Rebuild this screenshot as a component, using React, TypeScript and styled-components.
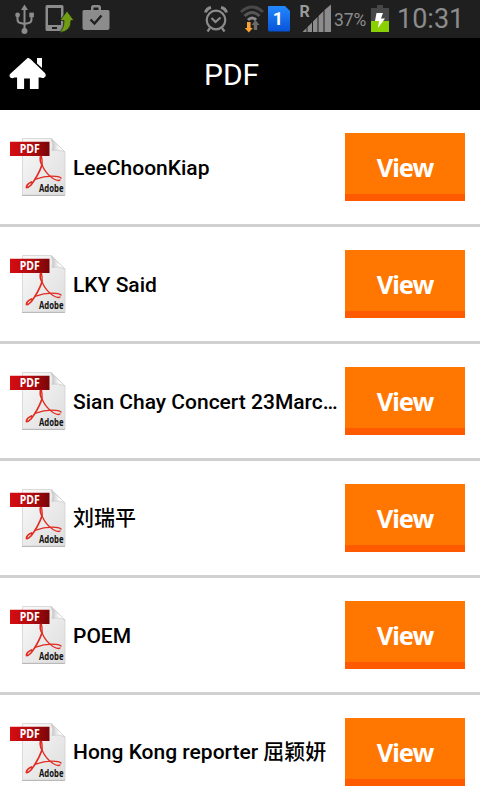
import React from 'react';
import styled, { createGlobalStyle } from 'styled-components';

const files = [
  { name: 'LeeChoonKiap' },
  { name: 'LKY Said' },
  { name: 'Sian Chay Concert 23Marc…' },
  { name: '刘瑞平', cjk: true },
  { name: 'POEM' },
  { name: 'Hong Kong reporter 屈颖妍', cjk: true },
];

const App = () => {
  return (
    <Screen>
      <GlobalStyle />
      <StatusBar>
        <StatusIcons />
        <Percent>37%</Percent>
        <Battery />
        <Clock>10:31</Clock>
      </StatusBar>
      <Header>
        <HomeButton>
          <HomeIcon />
        </HomeButton>
        <Title>PDF</Title>
        <div className="blank" />
      </Header>
      <List>
        {files.map(({ name, cjk }) => (
          <Row key={name}>
            <PdfIcon />
            <Name $cjk={cjk}>{name}</Name>
            <ViewButton>View</ViewButton>
          </Row>
        ))}
      </List>
    </Screen>
  );
};

const StatusIcons = () => (
  <svg width="334" height="38" viewBox="0 0 334 38">
    {/* usb */}
    <g stroke="#8c8c8c" fill="none" strokeWidth="2">
      <path d="M24.5 9v22M17.5 16v3.5q0 3 3 3.6l4 .9M31.5 16v3.5q0 3-3 3.6l-4 .9" />
    </g>
    <g fill="#8c8c8c">
      <path d="M24.5 4.5l3.5 5.5h-7z" />
      <circle cx="17.6" cy="15" r="2.4" />
      <rect x="29.3" y="12.6" width="4.6" height="4.6" />
      <circle cx="24.5" cy="31" r="3" />
    </g>
    {/* phone with arrow */}
    <path fill="#8c8c8c" fillRule="evenodd" d="M47 5h15q1.5 0 1.5 1.5V29.5q0 1.5-1.5 1.5H47q-1.5 0-1.5-1.5V6.5Q45.5 5 47 5zM48 8v17h13V8zM52 27v2h5v-2z" />
    <path fill="#6f9c12" stroke="#1f1f1f" strokeWidth=".8" d="M67 11l7 9.5h-3q0 11.5-12 12q5-3.5 5-12h-4z" />
    {/* briefcase */}
    <path fill="#8c8c8c" fillRule="evenodd" d="M84 10h7V7.5Q91 5 93.5 5h5q2.5 0 2.5 2.5V10h7q1.5 0 1.5 1.5v16.5q0 2-2 2h-23q-2 0-2-2V11.5Q82.5 10 84 10zM93.5 10h5V7.5h-5z" />
    <path d="M90.5 19.5l4 4 7-8" fill="none" stroke="#1f1f1f" strokeWidth="2.4" />
    {/* alarm */}
    <g fill="none" stroke="#8c8c8c" strokeWidth="2.2">
      <circle cx="216" cy="20" r="9.3" />
      <path d="M211.5 18l4 4 5-4.5M210 28l-2.5 3.5M222 28l2.5 3.5" />
      <path d="M205.5 12.5q1-4 5.5-5M226.5 12.5q-1-4-5.5-5" strokeWidth="3" />
    </g>
    {/* wifi with traffic arrows */}
    <g fill="none" strokeWidth="3">
      <path d="M241 12q11-10 22 0" stroke="#484848" />
      <path d="M244.5 16q7.5-7 15 0" stroke="#585858" />
      <path d="M248 20q4-4 8 0" stroke="#8c8c8c" />
    </g>
    <path fill="#f9a132" d="M247 22h3.6v6h2.2l-4 4.5-4-4.5h2.2z" />
    <path fill="#6c6c6c" d="M255.5 20l4 5h-2.3v5h-3.4v-5h-2.3z" />
    {/* sim card */}
    <defs>
      <linearGradient id="sim" x2="0" y2="1">
        <stop stopColor="#2389ff" />
        <stop offset="1" stopColor="#0753d8" />
      </linearGradient>
    </defs>
    <path fill="url(#sim)" d="M269 6h16l5 5v19q0 1.5-1.5 1.5h-19q-1.5 0-1.5-1.5V7q0-1 1-1z" />
    <text x="272.8" y="25" fill="#fff" fontFamily="Roboto" fontWeight="700" fontSize="18">1</text>
    {/* signal */}
    <text x="299.5" y="17" fill="#9a9a9a" fontFamily="Roboto" fontWeight="700" fontSize="16">R</text>
    <path fill="#8c8c8c" d="M302.5 32l4-4v4zM307.5 27l4.5-4.5V32h-4.5zM313 21.5l4.5-4.5V32H313zM318.5 16l5-5V32h-5zM324.5 10l6.5-5.5V32h-6.5z" />
  </svg>
);

const Battery = () => (
  <svg width="18" height="38" viewBox="0 0 18 38">
    <path fill="#474747" d="M6 5h6v3h6v13H0V8h6z" />
    <path fill="#8bd000" d="M0 21h18v11H0z" />
    <path fill="#fff" d="M5.5 13h6.5l-2 5.5h4l-7 9.5 1-7H4z" />
  </svg>
);

const HomeIcon = () => (
  <svg width="38" height="36" viewBox="0 0 38 36">
    <path
      fill="#fff"
      stroke="#fff"
      strokeWidth="1.2"
      strokeLinejoin="round"
      d="M19 2.5L1.5 18.5Q.5 20 2 21.3Q3.5 22 5 21h3.7v11.5h5.8V22h7v10.5h7.5V21h3.2q1.8 1 3-.2Q37 19.5 35.5 17.5L24 6.5Q20.5 2.5 19 2.5z"
    />
    <path fill="#fff" d="M28 2h5v10l-5-4.5z" />
  </svg>
);

const PdfIcon = () => (
  <PdfSvg viewBox="0 0 56 60">
    <defs>
      <linearGradient id="page" x2="1" y2="1">
        <stop stopColor="#fafafa" />
        <stop offset="1" stopColor="#dcdcdc" />
      </linearGradient>
      <linearGradient id="banner" x2="1" y2="0">
        <stop stopColor="#d60c10" />
        <stop offset=".5" stopColor="#b50c10" />
        <stop offset="1" stopColor="#780508" />
      </linearGradient>
      <linearGradient id="fold" x2="1" y2="0">
        <stop stopColor="#bcbcbc" />
        <stop offset=".6" stopColor="#fff" />
      </linearGradient>
    </defs>
    <path fill="url(#page)" stroke="#d2d2d2" strokeWidth=".8" d="M12.5 1.5H41L55 15v43H12.5z" />
    <path stroke="#b9b9b9" d="M12 58.5h43" />
    <path fill="url(#fold)" stroke="#c8c8c8" strokeWidth=".7" d="M41 1.5q3 6 1 12 6-2 13 1.5z" />
    <path fill="url(#banner)" d="M0 4.7h39.5V19H0z" />
    <text x="9.8" y="15.8" textLength="20" lengthAdjust="spacingAndGlyphs" fill="#fff" fontFamily="Noto Sans" fontWeight="700" fontSize="11.5">PDF</text>
    <g fill="none" stroke="#e12b21" strokeWidth="1.3" strokeLinecap="round" strokeLinejoin="round">
      <path strokeWidth="1.7" d="M30.5 19.5q-1 4 1.5 8.5Q28 39 21 48q-3 3-4.5 2.5-.5-3 5-5.5" />
      <path d="M31.5 19.5q1 4 .5 8.5Q36 37 43 41.5q5 3 7 1.5" />
      <path d="M25 42.3Q34 39.2 42 39.2q7.5 0 9 1.8" />
    </g>
    <text x="29" y="55.2" textLength="24.5" lengthAdjust="spacingAndGlyphs" fill="#111" fontFamily="Noto Sans" fontWeight="700" fontSize="11">Adobe</text>
  </PdfSvg>
);

const GlobalStyle = createGlobalStyle`
  * {
    box-sizing: border-box;
  }
  body {
    margin: 0;
    background: #fff;
    font-family: Roboto, 'Noto Sans CJK SC', sans-serif;
  }
  svg {
    display: block;
    flex: none;
  }
`;

const Screen = styled.div`
  width: 480px;
  height: 800px;
  overflow: hidden;
  background: #fff;
`;

const StatusBar = styled.div`
  display: flex;
  align-items: center;
  height: 38px;
  background: #1f1f1f;
  color: #8c8c8c;
`;

const Percent = styled.div`
  width: 37px;
  padding-top: 2px;
  font-size: 17.5px;
  letter-spacing: -0.1px;
`;

const Clock = styled.div`
  margin-left: 8px;
  font-size: 27px;
  line-height: 38px;
`;

const Header = styled.div`
  display: flex;
  align-items: center;
  height: 72px;
  background: #000;
  .blank {
    width: 55px;
  }
`;

const HomeButton = styled.div`
  width: 38px;
  margin-left: 9px;
  cursor: pointer;
`;

const Title = styled.div`
  flex: 1;
  padding-left: 157px;
  font-size: 30px;
  color: #fff;
`;

const List = styled.div`
  display: flex;
  flex-direction: column;
`;

const Row = styled.div`
  display: flex;
  align-items: center;
  height: 117px;
  padding: 0 15px 0 10px;
  border-bottom: 3px solid #d0d0d0;
`;

const PdfSvg = styled.svg`
  width: 56px;
  height: 60px;
  overflow: visible;
`;

const Name = styled.div<{ $cjk?: boolean }>`
  flex: 1;
  min-width: 0;
  margin: 0 7px;
  padding: ${({ $cjk }) => ($cjk ? '0 0 1px' : '1px 0 0')};
  font-size: 21px;
  font-weight: 500;
  line-height: 30px;
  color: #000;
  white-space: nowrap;
`;

const ViewButton = styled.div`
  flex: none;
  width: 120px;
  height: 68px;
  background: #ff7700;
  border-bottom: 7px solid #ff5a00;
  color: #fff;
  font-family: 'Noto Sans', sans-serif;
  font-size: 25.5px;
  font-weight: 700;
  line-height: 69px;
  letter-spacing: -1px;
  text-align: center;
  cursor: pointer;
`;

export default App;
